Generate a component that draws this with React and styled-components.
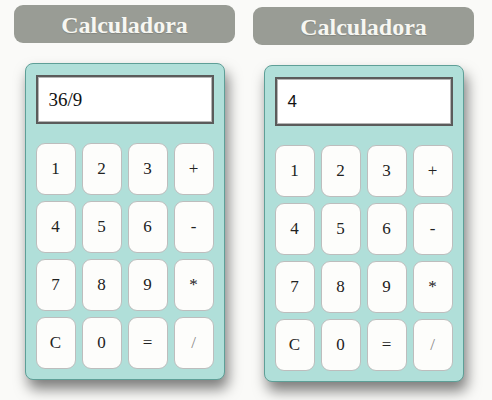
import React from "react";
import styled, { createGlobalStyle } from "styled-components";

const Global = createGlobalStyle`
  html, body { margin: 0; padding: 0; background: #fafaf8; }
  body { font-family: "Liberation Serif", "Times New Roman", serif; }
`;

const Page = styled.div`
  display: flex;
  align-items: flex-start;
  gap: 18px;
  padding: 5px 0 0 14px;
  height: 400px;
  box-sizing: border-box;
  overflow: hidden;
`;

const Panel = styled.div`
  width: 221px;
  display: flex;
  flex-direction: column;
  align-items: center;
  gap: 20px;
  margin-top: ${(p) => p.$offset || 0}px;
`;

const Title = styled.h1`
  margin: 0;
  width: 100%;
  height: 38px;
  box-sizing: border-box;
  background: #999c95;
  border-radius: 9px;
  color: #f7f7f2;
  font-family: "Liberation Serif", "Times New Roman", serif;
  font-weight: bold;
  font-size: 24px;
  line-height: 40px;
  text-align: center;
  text-shadow: 0 1px 1px rgba(0,0,0,0.15);
`;

const Calc = styled.div`
  width: 200px;
  box-sizing: border-box;
  background: #b0dfd9;
  border: 1px solid #5e9f97;
  border-radius: 8px;
  padding: 11px 10px 10px;
  box-shadow: 3px 9px 14px rgba(0, 0, 0, 0.5);
`;

const Display = styled.div`
  height: 49px;
  box-sizing: border-box;
  background: #fff;
  border: 2px solid #5b5b5b;
  box-shadow: inset 0 0 0 1px #b5b5b5;
  display: flex;
  align-items: center;
  padding-left: 11px;
  font-family: ${(p) => (p.$sans ? '"Liberation Sans", Arial, sans-serif' : '"Liberation Serif", "Times New Roman", serif')};
  font-size: ${(p) => (p.$sans ? 17 : 19)}px;
  color: #111;
`;

const Keys = styled.div`
  margin-top: 19px;
  display: grid;
  grid-template-columns: repeat(4, 40px);
  grid-auto-rows: 52px;
  gap: 6px;
`;

const Key = styled.button`
  box-sizing: border-box;
  background: #fdfdfb;
  border: 1px solid #bdbdbd;
  border-radius: 9px;
  font-family: "Liberation Serif", "Times New Roman", serif;
  font-size: 17px;
  color: ${(p) => (p.$light ? "#888" : "#222")};
  padding: 0;
  cursor: pointer;
`;

const keys = ["1", "2", "3", "+", "4", "5", "6", "-", "7", "8", "9", "*", "C", "0", "=", "/"];

function Calculator({ value, offset, sans }) {
  return (
    <Panel $offset={offset}>
      <Title>Calculadora</Title>
      <Calc>
        <Display $sans={sans}>{value}</Display>
        <Keys>
          {keys.map((k) => (
            <Key key={k} $light={k === "/"}>{k}</Key>
          ))}
        </Keys>
      </Calc>
    </Panel>
  );
}

export default function App() {
  return (
    <>
      <Global />
      <Page>
        <Calculator value="36/9" offset={0} />
        <Calculator value="4" offset={2} sans />
      </Page>
    </>
  );
}
